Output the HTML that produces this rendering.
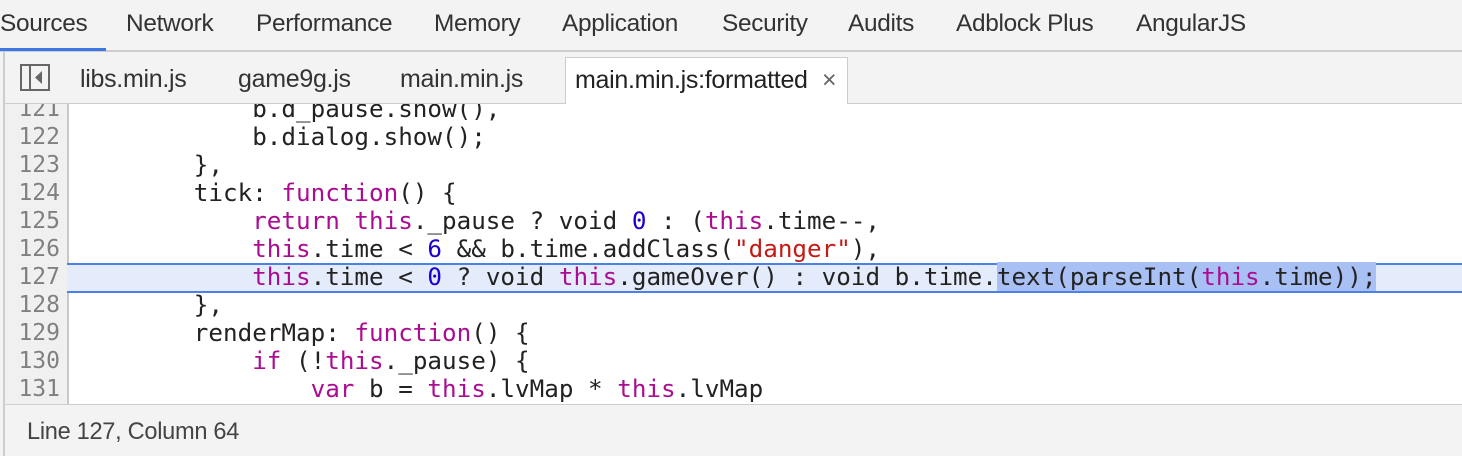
<!DOCTYPE html>
<html><head><style>
body{margin:0;width:1462px;height:456px;overflow:hidden;background:#f3f3f3;font-family:"Liberation Sans",sans-serif;position:relative}
.top{position:absolute;left:0;top:0;width:1462px;height:50px;border-bottom:2px solid #cdcdcd;box-sizing:content-box}
.top span{position:absolute;top:10px;font-size:24.4px;color:#333;letter-spacing:-0.3px}
.ul{position:absolute;left:0;top:48px;width:106px;height:3px;background:#3b78e7}
.bar{position:absolute;left:3px;top:52px;width:1459px;height:52px;border-left:2px solid #cdcdcd;border-bottom:1px solid #cdcdcd;box-sizing:border-box}
.bar span{position:absolute;top:13px;font-size:25px;color:#333;letter-spacing:-0.3px}
.act{position:absolute;left:560px;top:5px;width:283px;height:48px;background:#fff;border:1px solid #cdcdcd;border-bottom:none;box-sizing:border-box}
.ed{position:absolute;left:3px;top:104px;width:1459px;height:300px;background:#fff;overflow:hidden;border-left:2px solid #cdcdcd;box-sizing:border-box}
.gut{position:absolute;left:0;top:0;width:62px;height:300px;background:#f0f0f0;border-right:2px solid #c8c8c8}
.ln{position:absolute;left:0;height:28px;line-height:28px;font-family:"DejaVu Sans Mono","Liberation Mono",monospace;font-size:24.25px;white-space:pre}
.num{width:55px;text-align:right;color:#808080;font-size:23px}
.code{left:72px;color:#222}
.k{color:#aa0d91}.n{color:#1c00cf}.s{color:#c41a16}
.hl{position:absolute;left:62px;top:159px;width:1400px;height:30px;background:#e4ebfb;border-top:2px solid #4a80e8;border-bottom:2px solid #4a80e8;box-sizing:border-box}
.sel{background:#a9c0f4}
.st{position:absolute;left:3px;top:404px;width:1459px;height:52px;border-top:1px solid #cdcdcd;border-left:2px solid #cdcdcd;box-sizing:border-box}
.st span{position:absolute;left:22px;top:14px;font-size:23.6px;color:#444;letter-spacing:-0.3px}
</style></head><body>
<div class="top">
<span style="left:0">Sources</span><span style="left:126px">Network</span><span style="left:256px">Performance</span><span style="left:434px">Memory</span><span style="left:562px">Application</span><span style="left:722px">Security</span><span style="left:848px">Audits</span><span style="left:956px">Adblock Plus</span><span style="left:1136px">AngularJS</span>
</div>
<div class="ul"></div>
<div class="bar">
<svg style="position:absolute;left:15px;top:12px" width="32" height="28" viewBox="0 0 32 28"><rect x="1" y="1" width="28" height="25" fill="none" stroke="#666" stroke-width="2"/><line x1="10" y1="1" x2="10" y2="26" stroke="#666" stroke-width="2"/><path d="M22 7 L15 13.5 L22 20 Z" fill="#666"/></svg>
<span style="left:75px">libs.min.js</span><span style="left:233px">game9g.js</span><span style="left:395px">main.min.js</span>
<div class="act"><span style="left:9px;top:8px;color:#222">main.min.js:formatted</span><span style="left:256px;top:8px;color:#666">×</span></div>
</div>
<div class="ed">
<div class="gut"></div>
<div class="hl"></div>
<div class="ln num" style="top:-9px">121</div><div class="ln code" style="top:-9px">            b.d_pause.show(),</div>
<div class="ln num" style="top:19px">122</div><div class="ln code" style="top:19px">            b.dialog.show();</div>
<div class="ln num" style="top:47px">123</div><div class="ln code" style="top:47px">        },</div>
<div class="ln num" style="top:75px">124</div><div class="ln code" style="top:75px">        tick: <span class="k">function</span>() {</div>
<div class="ln num" style="top:103px">125</div><div class="ln code" style="top:103px">            <span class="k">return this</span>._pause ? void <span class="n">0</span> : (<span class="k">this</span>.time--,</div>
<div class="ln num" style="top:131px">126</div><div class="ln code" style="top:131px">            <span class="k">this</span>.time &lt; <span class="n">6</span> &amp;&amp; b.time.addClass(<span class="s">"danger"</span>),</div>
<div class="ln num" style="top:159px">127</div><div class="ln code" style="top:159px">            <span class="k">this</span>.time &lt; <span class="n">0</span> ? void <span class="k">this</span>.gameOver() : void b.time.<span class="sel">text(parseInt(<span class="k">this</span>.time));</span></div>
<div class="ln num" style="top:187px">128</div><div class="ln code" style="top:187px">        },</div>
<div class="ln num" style="top:215px">129</div><div class="ln code" style="top:215px">        renderMap: <span class="k">function</span>() {</div>
<div class="ln num" style="top:243px">130</div><div class="ln code" style="top:243px">            <span class="k">if</span> (!<span class="k">this</span>._pause) {</div>
<div class="ln num" style="top:271px">131</div><div class="ln code" style="top:271px">                <span class="k">var</span> b = <span class="k">this</span>.lvMap * <span class="k">this</span>.lvMap</div>
</div>
<div class="st"><span>Line 127, Column 64</span></div>
</body></html>
